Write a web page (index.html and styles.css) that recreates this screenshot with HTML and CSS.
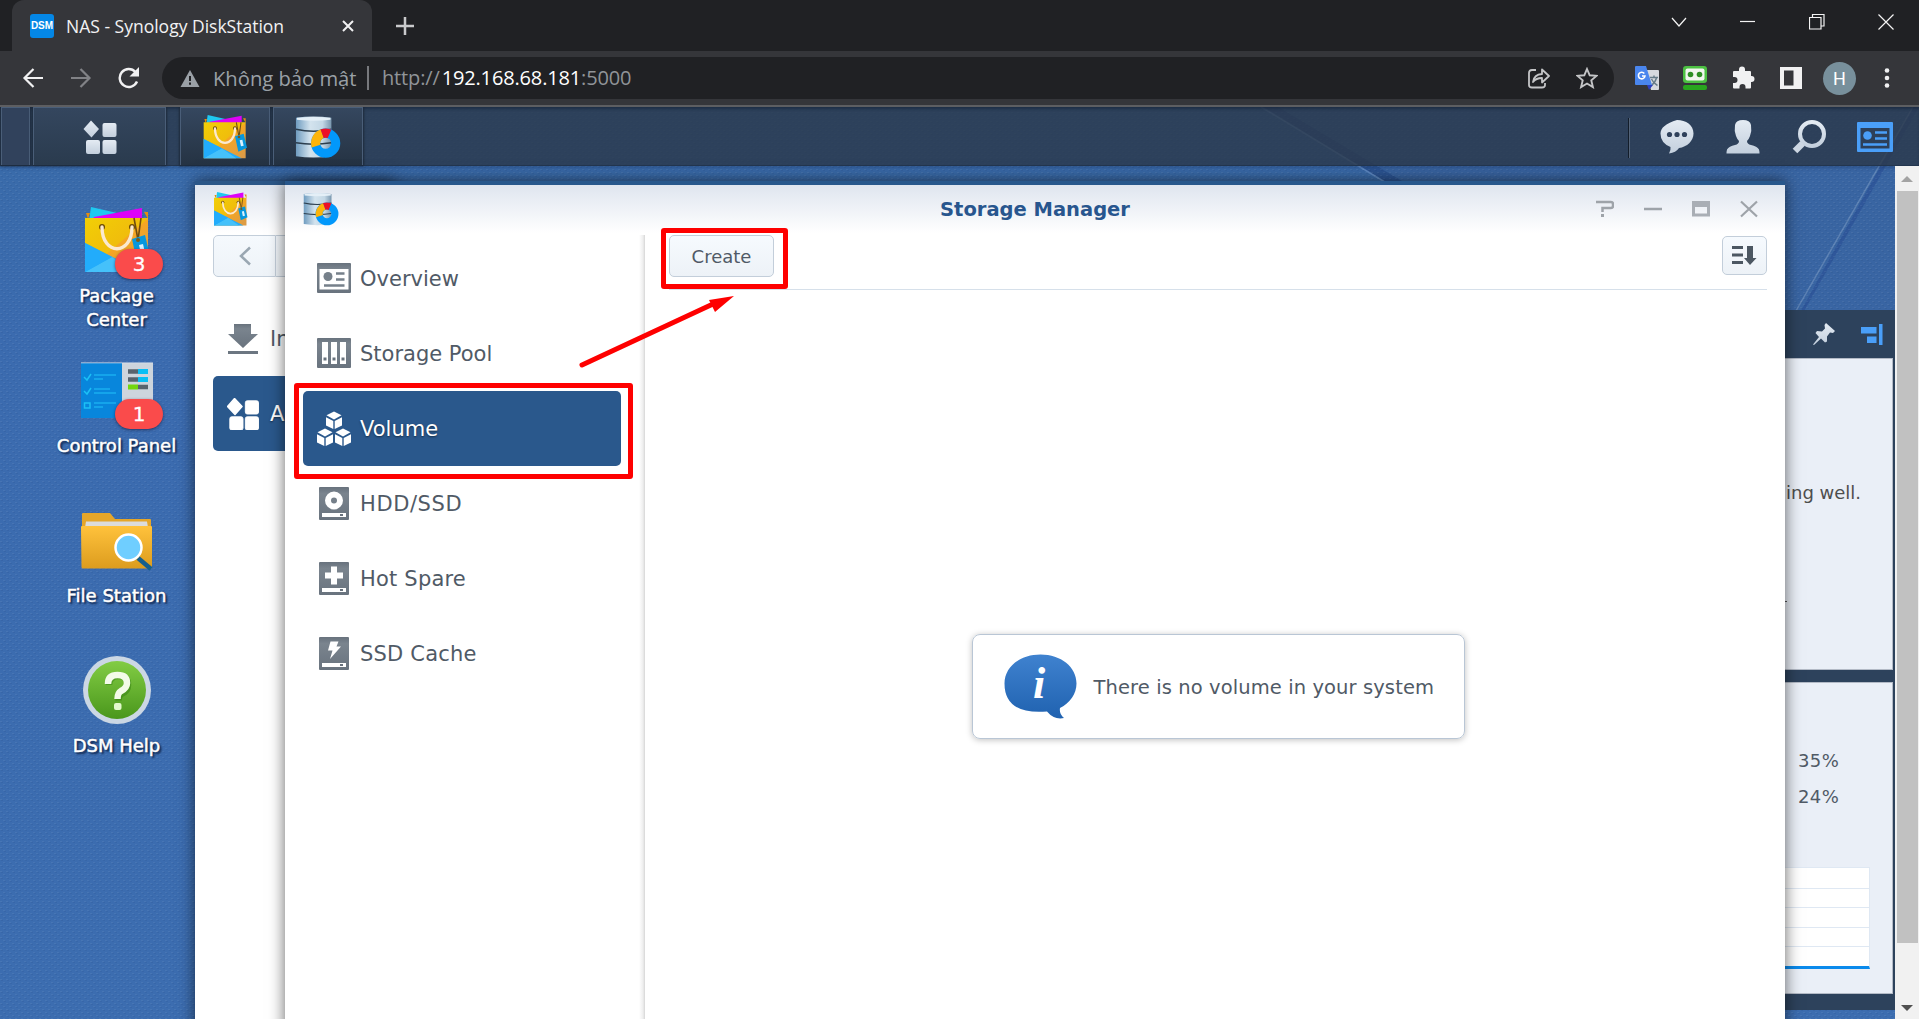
FILE: index.html

```html
<!DOCTYPE html>
<html lang="vi">
<head>
<meta charset="utf-8">
<title>NAS - Synology DiskStation</title>
<link rel="stylesheet" href="styles.css">
</head>
<body>
<svg class="defs" width="0" height="0" aria-hidden="true">
  <defs>
    <linearGradient id="gBag" x1="0" y1="0" x2="1" y2="1"><stop offset="0" stop-color="#f2cf05"/><stop offset=".5" stop-color="#f0bd0c"/><stop offset=".51" stop-color="#f5a623"/><stop offset="1" stop-color="#d99a4a"/></linearGradient>
    <linearGradient id="gDisk" x1="0" x2="1" y1="0" y2="0"><stop offset="0" stop-color="#6f9cc0"/><stop offset=".4" stop-color="#d3e3ee"/><stop offset=".75" stop-color="#c3d7e5"/><stop offset="1" stop-color="#7896ae"/></linearGradient>
    <linearGradient id="gLight" x1="0" x2="0" y1="0" y2="1"><stop offset="0" stop-color="#e4ebf3"/><stop offset="1" stop-color="#c3cfdd"/></linearGradient>
    <linearGradient id="gFolder" x1="0" x2="0" y1="0" y2="1"><stop offset="0" stop-color="#ffc23c"/><stop offset="1" stop-color="#dc9c1e"/></linearGradient>
    <linearGradient id="gGreen" x1="0" x2="0" y1="0" y2="1"><stop offset="0" stop-color="#82cc44"/><stop offset="1" stop-color="#4a971c"/></linearGradient>
    <linearGradient id="gInfo" x1="0" x2="0" y1="0" y2="1"><stop offset="0" stop-color="#3f82cf"/><stop offset="1" stop-color="#2062b0"/></linearGradient>
    <linearGradient id="gGrey" x1="0" x2="0" y1="0" y2="1"><stop offset="0" stop-color="#68727d"/><stop offset=".2" stop-color="#7a848e"/><stop offset="1" stop-color="#69737e"/></linearGradient>
    <symbol id="bag" viewBox="0 0 66 66">
      <path d="M7 0 42 8 40 16 5 14z" fill="#1fc8f0"/><path d="M10 10 58 1v12H8z" fill="#dd02f7"/>
      <path d="M2 6h4l-2 6zM60 5h4v7z" fill="#e08e12"/>
      <path d="M1 11h63v54H1z" fill="url(#gBag)"/>
      <path d="M1 36 58 65H1z" fill="#22acfb"/>
      <path d="M28 50 50 65H1z" fill="#45c1fa"/>
      <path d="M1 36 28 50 1 65z" fill="#22acfb"/>
      <circle cx="18" cy="20" r="3" fill="#6b4a06"/><circle cx="48" cy="20" r="3" fill="#6b4a06"/>
      <path d="M18 20c0 29 30 29 30 0" fill="none" stroke="#fbe9cf" stroke-width="3.4" stroke-linecap="round"/>
      <path d="m50 11 4 22 3-22" fill="none" stroke="#6e4c10" stroke-width="1.6"/>
      <path d="m48 32 13-4 5 21-13 6z" fill="#0797dd"/><path d="m55 38 4-1 2 9-4 1z" fill="#d8f2ff"/><circle cx="54" cy="33" r="2" fill="#7c5a16"/>
    </symbol>
    <symbol id="disk" viewBox="0 0 48 44">
      <path d="M1 2Q19-1 38 2v40q-19 3-37 0z" fill="url(#gDisk)"/>
      <path d="M2 2q17-2 35 0v2q-17 2-35 0z" fill="#e4eff7"/>
      <path d="M1 14q18 4 37 0M1 28q18 3 37 0" fill="none" stroke="#2c3e4e" stroke-width="1.6"/>
      <circle cx="32" cy="28.500" r="10.500" fill="none" stroke="#0298fb" stroke-width="9.500"/>
      <path d="M22 31.500A10.500 10.500 0 0 1 28.500 18.500" fill="none" stroke="#fdb409" stroke-width="9.500"/>
      <path d="M28.300 18.600A10.500 10.500 0 0 1 36 18.800" fill="none" stroke="#ed1026" stroke-width="9.500"/>
    </symbol>
    <symbol id="apps" viewBox="0 0 34 34"><path d="M8 0.500 16 9 8.500 17.500 0.500 9z" stroke-width="1.500" stroke-linejoin="round"/><rect x="19.500" y="3" width="14" height="14" rx="2"/><rect x="3" y="20" width="14" height="14" rx="2"/><rect x="19.500" y="20" width="14" height="14" rx="2"/></symbol>
  </defs>
</svg>

<header class="tabstrip">
  <div class="tab">
    <span class="favicon">DSM</span>
    <span class="tab-title">NAS - Synology DiskStation</span>
    <svg class="tab-close" width="12" height="12" viewBox="0 0 12 12"><path d="m1 1 10 10M11 1 1 11" stroke="#f1f1f2" stroke-width="2"/></svg>
  </div>
  <svg class="new-tab" width="18" height="18" viewBox="0 0 18 18"><path d="M9 0v18M0 9h18" stroke="#c9cacc" stroke-width="2.500"/></svg>
  <div class="win-buttons">
    <svg width="16" height="16" viewBox="0 0 16 16"><path d="m1 4 7 8 7-8"/></svg>
    <svg width="16" height="16" viewBox="0 0 16 16"><path d="M0 7.500h15"/></svg>
    <svg width="16" height="16" viewBox="0 0 16 16"><path d="M.5 3.500h11.500v11.500H.5zM3.500 3.500V.5h11.500v11.500h-3"/></svg>
    <svg width="16" height="16" viewBox="0 0 16 16"><path d="m.5.5 15 15m0-15-15 15"/></svg>
  </div>
</header>

<nav class="toolbar">
  <div class="nav-icons">
    <svg width="22" height="22" viewBox="0 0 22 22"><path d="M21 11H3M11.500 2 2.500 11l9 9" fill="none" stroke="#f1f1f2" stroke-width="2.200"/></svg>
    <svg width="22" height="22" viewBox="0 0 22 22"><path d="M1 11h18M10.500 2l9 9-9 9" fill="none" stroke="#818286" stroke-width="2.200"/></svg>
    <svg width="22" height="22" viewBox="0 0 22 22"><path d="M19 14.500A9 9 0 1 1 17.500 5" fill="none" stroke="#f1f1f2" stroke-width="2.400"/><path d="M21 0v9.500h-9.500z" fill="#f1f1f2"/></svg>
  </div>
  <div class="omnibox">
    <svg width="20" height="17" viewBox="0 0 20 17"><path d="M10 0 19.500 17H.5z" fill="#9aa0a6"/><path d="M10 6v5M10 12.500v2.200" stroke="#202124" stroke-width="2"/></svg>
    <span class="insecure">Không bảo mật</span>
    <span class="omni-sep"></span>
    <span class="url">http://<b>192.168.68.181</b>:5000</span>
    <svg class="share" width="22" height="22" viewBox="0 0 22 22" fill="none" stroke="#c4c5c7" stroke-width="1.800"><path d="M8 3H4Q1 3 1 6v12q0 2.500 3 2.500h10q3 0 3-2.500v-2"/><path d="M5 15Q6 7.500 14 7V2.500l7 6.500-7 6.500V11q-6 0-9 4z" stroke-linejoin="round"/></svg>
    <svg class="star" width="22" height="22" viewBox="0 0 22 22"><path d="m11 2 2.700 6.300 6.800.6-5.200 4.500 1.600 6.700L11 16.500 5.100 20.100l1.600-6.700L1.500 8.900l6.800-.6z" fill="none" stroke="#c4c5c7" stroke-width="1.900"/></svg>
  </div>
  <div class="extensions">
    <svg width="24" height="24" viewBox="0 0 24 24"><path d="M10 4h13q1 0 1 1v18q0 1-1 1H16z" fill="#d7dade"/><path d="M15 11.500h8M19 9.500v2M21.500 12q-1.500 5-5.500 7.500M16.500 13q2 4.500 6 6.500" fill="none" stroke="#667b88" stroke-width="1.400"/><path d="M12 19h6l-4 5z" fill="#2c3fc0"/><path d="M1 0h10l6 19H1q-1 0-1-1V1q0-1 1-1z" fill="#4a86ee"/><path d="M9.300 7.500A3.300 3.300 0 1 0 10 10H7" fill="none" stroke="#fff" stroke-width="1.600"/></svg>
    <svg width="24" height="24" viewBox="0 0 24 24"><rect width="24" height="17" rx="3" fill="#4cc042"/><rect x="2.500" y="2.500" width="19" height="12" rx="2" fill="#f2f5f0"/><circle cx="7.500" cy="8.500" r="2.800" fill="#2f8e25"/><circle cx="16.500" cy="8.500" r="2.800" fill="#2f8e25"/><rect y="19" width="24" height="5" rx="2" fill="#28a51e"/></svg>
    <svg width="24" height="24" viewBox="0 0 24 24"><path d="M3 5h5V3.500a3 3 0 0 1 6 0V5h5q1 0 1 1v4h.5a3 3 0 0 1 0 6H20v5.500q0 1-1 1h-4.500V21a3 3 0 0 0-6 0v1.500H3q-1 0-1-1V17h1.500a3 3 0 0 0 0-6H2V6q0-1 1-1z" fill="#f1f1f2"/></svg>
    <svg width="22" height="22" viewBox="0 0 22 22"><path d="M0 0h22v22H0zM4 3.500v15h9.500v-15z" fill="#f1f1f2" fill-rule="evenodd"/></svg>
    <span class="avatar">H</span>
    <svg width="6" height="22" viewBox="0 0 6 22" fill="#f1f1f2"><circle cx="3" cy="3.500" r="2.300"/><circle cx="3" cy="11" r="2.300"/><circle cx="3" cy="18.500" r="2.300"/></svg>
  </div>
</nav>

<main class="dsm">
  <svg class="wallpaper" width="1919" height="912" viewBox="0 107 1919 912">
    <defs>
      <pattern id="dots" width="6" height="6" patternUnits="userSpaceOnUse"><path d="M0 1h2v1H0zM3 4h2v1H3z" fill="#fff" opacity=".06"/><path d="M1 2h2v1H1zM4 5h2v1H4z" fill="#00184a" opacity=".07"/></pattern>
      <linearGradient id="sky" x1="0" y1="0" x2="0" y2="1"><stop offset="0" stop-color="#396ba8"/><stop offset=".25" stop-color="#3b6baf"/><stop offset="1" stop-color="#3c6db0"/></linearGradient>
    </defs>
    <rect y="107" width="1919" height="912" fill="url(#sky)"/>
    <path d="M1262 107 1400 190 1785 420 1919 1019V107z" fill="#3a64a0" opacity=".8"/>
    <path d="M1264 107h14l134 80h-18z" fill="#2c5594"/><path d="M1261 107l132 80" stroke="#6d97cf" stroke-width="1.500" opacity=".7"/>
    <path d="M1913 107h6L1799 320l-14 20z" fill="#2f579a"/><path d="M1913 107 1785 330" stroke="#6c8fbd" stroke-width="1.500" opacity=".7"/>
    <rect y="107" width="1919" height="912" fill="url(#dots)"/>
  </svg>

  <div class="taskbar">
    <span class="task-edge"></span>
    <div class="task main-menu"><svg width="34" height="34" fill="url(#gLight)"><use href="#apps"/></svg></div>
    <div class="task app"><svg width="46" height="44"><use href="#bag"/></svg></div>
    <div class="task app"><svg width="46" height="44"><use href="#disk"/></svg></div>
    <div class="tray">
      <svg width="36" height="36" viewBox="0 0 36 36"><path d="M18 1C27 1 34.500 6 34.500 14.500 34.500 22 28 28 20 29q-3 4.500-10 5.500 2-3 1.500-6.500Q1.500 24 1.500 14.500 1.500 6 18 1z" fill="url(#gLight)"/><g fill="#2f415b"><circle cx="10.500" cy="15.500" r="2.600"/><circle cx="18" cy="15.500" r="2.600"/><circle cx="25.500" cy="15.500" r="2.600"/></g></svg>
      <svg width="36" height="36" viewBox="0 0 36 36"><path d="M10 6q1-5 8-5t8 5q1 6-1 11-1.500 4-3 5 0 3 4 4 6 1 8 4.500.5 2 .5 4H1.500q0-2 .5-4 2-3.500 8-4.500 4-1 4-4-1.500-1-3-5-2-5-1-11z" fill="url(#gLight)"/></svg>
      <svg width="36" height="36" viewBox="0 0 36 36"><circle cx="21" cy="15" r="12" fill="none" stroke="url(#gLight)" stroke-width="4"/><path d="m11.500 24.500-7.500 7.500" stroke="#ccd6e2" stroke-width="6.500"/></svg>
      <svg width="36" height="30" viewBox="0 0 36 30"><path d="M0 1q0-1 1-1h34q1 0 1 1v28q0 1-1 1H1q-1 0-1-1zM3.500 6v20.500h29V6z" fill="#4a9ff9" fill-rule="evenodd"/><circle cx="10.500" cy="13.500" r="4.300" fill="#4a9ff9"/><path d="M18 10.500h12M18 16.500h12M6 22.500h24" stroke="#4a9ff9" stroke-width="2.500"/></svg>
    </div>
  </div>

  <div class="desktop">
    <ul class="shortcuts">
      <li><div class="pic"><svg width="66" height="66"><use href="#bag"/></svg><em class="badge">3</em></div><span>Package Center</span></li>
      <li><div class="pic"><svg width="72" height="56" viewBox="0 0 72 56"><path d="M0 1h41v55H0z" fill="#0886dc"/><path d="M41 1h31v55H41z" fill="#cdd5dd"/><path d="M0 0h72v1.500H0z" fill="#dfe8f0" opacity=".5"/><path d="m3 15 3 3 4-6M3 29l3 3 4-6M3.500 41h5.500v5H3.500z" fill="none" stroke="#1cc0f5" stroke-width="1.500"/><path d="M13 13h22M13 17h9M13 27h16M13 31h22M13 41h22M13 45h9" stroke="#18aef0" stroke-width="1.600"/><path d="M47 9.500h10M47 17.500h10M57 25h10" stroke="#58646e" stroke-width="4.500"/><path d="M57 9.500h10M57 17.500h10" stroke="#09bff5" stroke-width="5"/><path d="M47 25h10" stroke="#73d60f" stroke-width="5"/></svg><em class="badge">1</em></div><span>Control Panel</span></li>
      <li><div class="pic folder"><svg width="72" height="60" viewBox="0 0 72 60"><path d="M1 2q0-1 1-1h27l5 6h35q1 0 1 1v20H1z" fill="#e5a62a"/><path d="M5 9.500h61l1 6H4z" fill="#dcdcdc"/><path d="M0 15q0-1 1-1h69q1 0 1 1v40q0 1.500-1 1.500H2q-1.500 0-1.500-1.500z" fill="url(#gFolder)"/><path d="m57 46 13 11" stroke="#155f8e" stroke-width="4.500"/><circle cx="47.500" cy="35.500" r="13" fill="#6fceff" stroke="#fff" stroke-width="2.500"/></svg></div><span>File Station</span></li>
      <li><div class="pic"><svg width="70" height="72" viewBox="0 0 70 72"><circle cx="35" cy="36" r="34" fill="#cbd7e4"/><circle cx="35" cy="36" r="29" fill="url(#gGreen)"/><path d="M26 29q0-9 9.500-9T45 29q0 6-6 8.500-3.500 2-3.500 7" fill="none" stroke="#317d10" stroke-width="6.500" transform="translate(1 2)" opacity=".5"/><path d="M26 30q0-9 9.500-9T45 29q0 5-6 8-3.500 2-3.500 8" fill="none" stroke="#f3fbe8" stroke-width="6.500"/><rect x="32" y="49" width="7.500" height="7" rx="2" fill="#e2f9cc"/></svg></div><span>DSM Help</span></li>
    </ul>

    <aside class="widgets">
      <div class="widgets-head">
        <svg width="22" height="22" viewBox="0 0 22 22"><path d="m13 0 9 8-2 2-3-.5-3 4v5l-2 1-4-4L1 22l-1-.5 6-7.500-3.500-4 1.500-2 5 .5 3-3L11.500 2z" fill="url(#gLight)"/></svg>
        <svg width="22" height="21" viewBox="0 0 22 21"><path d="M0 3h15.500v6.500H0zM6 12.500h9.500V19H6zM18 0h3.500v21H18z" fill="#4a9ff9"/></svg>
      </div>
      <section class="widget health"><p>ing well.</p><i></i></section>
      <section class="widget monitor"><p>35%</p><p>24%</p><div class="chart"><i></i><i></i><i></i><i></i><i></i></div></section>
    </aside>

    <section class="window package">
      <div class="win-head"><svg width="35" height="34"><use href="#bag"/></svg></div>
      <div class="back-btns"><span><svg width="12" height="20" viewBox="0 0 12 20"><path d="m11 1.500-9 8.500 9 8.500" fill="none" stroke="#9aa7b2" stroke-width="2.500"/></svg></span><span></span></div>
      <ul class="menu">
        <li><svg width="32" height="32" viewBox="0 0 32 32"><path d="M7 1h17v10h7L16 25 1 11h6z" fill="url(#gGrey)"/><path d="M1 28h30v3H1z" fill="#6c7681"/></svg><span>In</span></li>
        <li class="on"><svg width="32" height="32" fill="#fff" stroke="#fff"><use href="#apps"/></svg><span>A</span></li>
      </ul>
    </section>

    <section class="window storage">
      <div class="win-head">
        <svg width="36" height="34"><use href="#disk"/></svg>
        <h1>Storage Manager</h1>
        <div class="controls">
          <svg width="18" height="18" viewBox="0 0 18 18"><path d="M0 2h15q2 0 2 2v2q0 2-2 2H6.500v4" fill="none" stroke="#9ea3a9" stroke-width="2.500"/><path d="M5 14h3v3H5z" fill="#9ea3a9"/></svg>
          <svg width="18" height="18" viewBox="0 0 18 18"><path d="M0 9h18" stroke="#9ea3a9" stroke-width="2.500"/></svg>
          <svg width="18" height="18" viewBox="0 0 18 18"><path d="M0 1h18v15.500H0zM3 7v6.500h12V7z" fill="#a9aeb5" fill-rule="evenodd"/></svg>
          <svg width="18" height="18" viewBox="0 0 18 18"><path d="m1 1.500 16 15m0-15-16 15" stroke="#9ea3a9" stroke-width="2.200"/></svg>
        </div>
      </div>
      <div class="win-body">
        <ul class="menu">
          <li><svg width="36" height="36" viewBox="0 0 36 36"><path d="M1 3q0-1 1-1h32q1 0 1 1v28q0 1-1 1H2q-1 0-1-1zM3.500 8v20.500h29V8z" fill="url(#gGrey)" fill-rule="evenodd"/><circle cx="12" cy="15.500" r="4.500" fill="#76808a"/><path d="M20 12.500H28.500M20 18.500H28.500M8 24.500H28.500" stroke="#76808a" stroke-width="2.600"/></svg><span>Overview</span></li>
          <li><svg width="36" height="36" viewBox="0 0 36 36"><rect x="1" y="2" width="34" height="30" rx="1" fill="url(#gGrey)"/><path d="M6 6h6v22H6zM15 6h6v22H15zM24 6h6v22H24z" fill="#fff"/><path d="M7.500 21.500h3v3h-3zM16.500 21.500h3v3h-3zM25.500 21.500h3v3h-3z" fill="#68727d"/></svg><span>Storage Pool</span></li>
          <li class="on"><svg width="36" height="36" viewBox="0 0 36 36" fill="#fff"><g id="cube"><path d="m18 .5 7.500 3.800L18 8.500l-7.500-4.200z"/><path d="M10 6.200 17.300 10v8L10 14.500zM26 6.200 18.700 10v8l7.300-3.500z"/></g><use href="#cube" x="-9" y="17"/><use href="#cube" x="9" y="17"/></svg><span>Volume</span></li>
          <li><svg width="36" height="36" viewBox="0 0 36 36"><rect x="3" y="1" width="30" height="33" rx="1" fill="url(#gGrey)"/><circle cx="18" cy="14.500" r="6" fill="none" stroke="#fff" stroke-width="6"/><path d="M6 27h24v4H6z" fill="#fff"/><path d="M24 28h3v2h-3z" fill="#68727d"/></svg><span class="caps">HDD/SSD</span></li>
          <li><svg width="36" height="36" viewBox="0 0 36 36"><rect x="3" y="1" width="30" height="33" rx="1" fill="url(#gGrey)"/><path d="M15 5.500h6v6h6v6h-6v6h-6v-6H9v-6h6z" fill="#fff"/><path d="M6 27h24v4H6z" fill="#fff"/><path d="M24 28h3v2h-3z" fill="#68727d"/></svg><span class="wide">Hot Spare</span></li>
          <li><svg width="36" height="36" viewBox="0 0 36 36"><rect x="3" y="1" width="30" height="33" rx="1" fill="url(#gGrey)"/><path d="M14.500 5.500h8l-2 5H25L14 23l2.500-8.500H12z" fill="#fff"/><path d="M6 27h24v4H6z" fill="#fff"/><path d="M24 28h3v2h-3z" fill="#68727d"/></svg><span class="wide">SSD Cache</span></li>
        </ul>
        <div class="pane">
          <div class="pane-bar">
            <button class="create">Create</button>
            <button class="sort"><svg width="25" height="20" viewBox="0 0 25 20"><path d="M0 0h11v3H0zM0 7.500h11v3H0zM0 15h11v3H0zM15 0h6v12h3.500L18 19l-6-7h3z" fill="#4c5762"/></svg></button>
          </div>
          <div class="message">
            <div class="msg-box">
              <svg width="73" height="65" viewBox="0 0 73 65"><path d="M36.500.5C57 .5 72.500 13 72.500 29.500 72.500 40 66 49 56 54q-1 6 4 10-10 2-17-6.500Q.5 61 .5 29.500C.5 13 16 .5 36.500.5z" fill="url(#gInfo)"/><text x="29" y="44" class="info-i">i</text></svg>
              <span>There is no volume in your system</span>
            </div>
          </div>
        </div>
      </div>
    </section>

    <div class="scrollbar">
      <svg width="12" height="6" viewBox="0 0 12 6"><path d="m6 0 6 6H0z" fill="#a3a3a3"/></svg>
      <span class="thumb"></span>
      <svg width="12" height="6" viewBox="0 0 12 6"><path d="M0 0h12L6 6z" fill="#505050"/></svg>
    </div>
  </div>

  <span class="mark mark-volume"></span>
  <span class="mark mark-create"></span>
  <svg class="arrow" width="160" height="76" viewBox="0 0 160 76"><path d="M7 70 138 9" stroke="#fe0000" stroke-width="5" stroke-linecap="round"/><path d="M159 1 134 5l6 12z" fill="#fe0000"/></svg>
</main>
</body>
</html>
```

FILE: styles.css

```css
* { box-sizing: border-box; }
body {
  margin: 0;
  width: 1919px;
  height: 1019px;
  overflow: hidden;
  display: flex;
  flex-direction: column;
  font-family: "DejaVu Sans", sans-serif;
  color: #505a66;
}
ul { list-style: none; margin: 0; padding: 0; }
p, h1 { margin: 0; }
svg { flex: none; display: block; }
.defs { position: absolute; }

/* Browser chrome */
.tabstrip {
  height: 51px;
  flex: none;
  display: flex;
  align-items: flex-start;
  background: #202124;
  padding-left: 12px;
}
.tab {
  width: 360px;
  height: 51px;
  display: flex;
  align-items: center;
  padding: 0 18px;
  background: #35363a;
  border-radius: 12px 12px 0 0;
}
.favicon {
  width: 24px;
  height: 24px;
  border-radius: 3px;
  background: #0487e6;
  color: #fff;
  font: bold 10px/24px "Liberation Sans", sans-serif;
  text-align: center;
}
.tab-title {
  font: 17.500px/24px "Open Sans", sans-serif;
  color: #f2f2f3;
  margin-left: 12px;
  flex: 1;
  white-space: nowrap;
}
.new-tab { margin: 17px 0 0 24px; }
.win-buttons { margin: 14px 25px 0 auto; display: flex; gap: 53px; }
.win-buttons path { fill: none; stroke: #f4f4f4; stroke-width: 1.2; }

.toolbar {
  height: 56px;
  flex: none;
  display: flex;
  align-items: center;
  padding-bottom: 2px;
  background: #35363a;
  border-bottom: 2px solid #5d5e61;
}
.nav-icons { width: 162px; display: flex; gap: 26px; padding-left: 22px; margin-top: 2px; }
.omnibox {
  width: 1452px;
  height: 42px;
  margin-top: 2px;
  border-radius: 21px;
  background: #202124;
  display: flex;
  align-items: center;
  padding: 0 16px 0 18px;
  font: 20px/30px "Open Sans", sans-serif;
  color: #9aa0a6;
  white-space: nowrap;
}
.insecure { margin-left: 13px; width: 146px; font-size: 20.200px; }
.omni-sep { width: 2px; height: 24px; background: #77797d; margin: 0 13px 0 8px; }
.url { font-size: 20px; letter-spacing: -0.15px; flex: 1; color: #909498; }
.url b { font-weight: normal; color: #fff; margin-left: 2px; }
.star { margin-left: 26px; }
.extensions { display: flex; align-items: center; padding-left: 21px; margin-top: 2px; }
.extensions > :nth-child(2) { margin-left: 24px; }
.extensions > :nth-child(3) { margin-left: 24px; }
.extensions > :nth-child(4) { margin-left: 25px; }
.avatar {
  width: 33px;
  height: 33px;
  margin: 0 28px 0 21px;
  border-radius: 50%;
  background: #78909c;
  color: #fff;
  font: 18px/33px Roboto, sans-serif;
  text-align: center;
}

/* DSM shell */
.dsm { position: relative; flex: 1; display: flex; flex-direction: column; overflow: hidden; }
.wallpaper { position: absolute; left: 0; top: 0; }
.taskbar {
  position: relative;
  height: 59px;
  flex: none;
  display: flex;
  background: rgba(43, 56, 74, .82);
  border-bottom: 1px solid #23364f;
  box-shadow: inset 0 3px 3px -1px rgba(16, 30, 50, .5), 0 1px 4px rgba(20, 40, 80, .4);
}
.task-edge, .task { height: 58px; border: 1px solid #4a5e78; border-bottom: 0; box-shadow: 0 0 2px 1px #1d2a3a; }
.task-edge { width: 29px; margin: 0 3px 0 1px; background: #31425c; }
.task { display: flex; align-items: center; justify-content: center; background: linear-gradient(#35475f, #253343); }
.main-menu { width: 133px; margin-right: 14px; background: linear-gradient(#34465e, #2a3b4e); }
.app { width: 90px; margin-right: 3px; }
.tray {
  margin: 0 26px 0 auto;
  display: flex;
  align-items: center;
  gap: 30px;
  padding-left: 31px;
  height: 59px;
  background: linear-gradient(90deg, #131d2a 1px, #536378 1px, #536378 2px, transparent 2px) 0 11px / 100% 40px no-repeat;
}

.desktop { position: relative; flex: 1; display: flex; justify-content: space-between; }
.shortcuts { padding: 30px 0 0 44px; display: flex; flex-direction: column; }
.shortcuts li { width: 145px; height: 150px; text-align: center; }
.pic { position: relative; height: 88px; display: flex; align-items: center; justify-content: center; }
.pic.folder { padding-top: 3px; }
.badge {
  position: absolute;
  left: 71px;
  top: 53px;
  width: 48px;
  height: 30px;
  border-radius: 15px;
  background: #fa4b4b;
  color: #fff;
  font: 20px/31px "DejaVu Sans", sans-serif;
  -webkit-text-stroke: .3px #fff;
  box-shadow: 0 1px 3px rgba(20, 20, 50, .6);
}
.shortcuts span {
  display: block;
  width: 130px;
  margin: 0 auto;
  font-size: 18px;
  line-height: 24px;
  color: #fff;
  -webkit-text-stroke: .5px #fff;
  text-shadow: 2px 2px 2px #0e2247, 0 0 2px rgba(10, 25, 60, .7);
}

/* Widget column at the right edge of the desktop */
.widgets {
  position: absolute;
  left: 1780px;
  top: 144px;
  width: 115px;
  height: 700px;
  background: #2d425c;
}
.widgets-head { height: 48px; display: flex; align-items: center; justify-content: flex-end; gap: 26px; padding-right: 12px; }
.widget {
  width: 113px;
  height: 312px;
  background: #eaeff7;
  border: 1px solid #b3bac6;
  font-size: 18px;
}
.health { padding: 122px 0 0 5px; color: #4e4e4e; }
.health p { line-height: 24px; }
.health i { display: block; width: 2px; height: 1px; margin: 96px 0 0 -1px; background: #555; }
.monitor { margin-top: 12px; padding: 60px 22px 0 0; }
.monitor p { padding-left: 17px; line-height: 36px; height: 36px; letter-spacing: .4px; }
.chart {
  margin-top: 52px;
  height: 102px;
  display: grid;
  grid-template-rows: repeat(5, 1fr);
  background: #fff;
  border-top: 1px solid #dfe8f3;
  border-right: 1px solid #dfe8f3;
  border-bottom: 3px solid #0a8aec;
}
.chart i + i { border-top: 1px solid #dfe8f3; }

/* Windows */
.window {
  position: absolute;
  top: 15px;
  bottom: -20px;
  background: #fff;
  border-top: 4px solid #28578c;
  box-shadow: 0 0 15px rgba(0, 0, 0, .6);
}
.package { left: 195px; width: 200px; border-top-color: #2c5788; }
.storage { left: 285px; width: 1500px; display: flex; flex-direction: column; }
.win-head {
  height: 50px;
  flex: none;
  display: flex;
  align-items: center;
  padding: 0 27px 0 18px;
  background: linear-gradient(#dfe5ef, #fff 96%);
}
.win-head svg:first-child { margin-bottom: 2px; }
.win-head h1 { flex: 1; text-align: center; font-size: 19.500px; line-height: 24px; color: #28568e; padding-left: 135px; }
.controls { display: flex; gap: 30px; }

.back-btns { display: flex; height: 42px; margin: 0 0 24px 18px; }
.back-btns span {
  width: 63px;
  border: 1px solid #c3ceda;
  background: linear-gradient(#f5f9fd, #eef3f8);
  display: flex;
  align-items: center;
  justify-content: center;
}
.back-btns span:first-child { border-radius: 5px 0 0 5px; }
.back-btns span + span { border-left: 0; }
.menu li {
  height: 75px;
  display: flex;
  align-items: center;
  gap: 8px;
  padding-left: 13px;
  font-size: 21px;
  border-radius: 5px;
  white-space: nowrap;
}
.menu .caps { letter-spacing: .6px; }
.menu .wide { letter-spacing: .2px; }
.menu li.on { background: #2a588c; color: #fff; text-shadow: 0 1px 2px rgba(0, 0, 0, .5); }
.package .menu { padding-left: 18px; overflow: hidden; }
.package .menu li { gap: 11px; padding-left: 14px; }

.win-body { flex: 1; display: flex; }
.storage .menu {
  width: 360px;
  padding: 6px 24px 0 18px;
  background: linear-gradient(90deg, transparent 354px, #eee 358px, #d6d6d6);
}
.storage .menu li { padding-left: 12.500px; }
.storage .menu li svg { margin-right: .5px; }
.pane { flex: 1; display: flex; flex-direction: column; padding: 0 18px 0 24px; }
.pane-bar { height: 55px; flex: none; display: flex; justify-content: space-between; border-bottom: 1px solid #d6e0ea; }
button {
  padding: 0;
  border: 1px solid #c3ceda;
  border-radius: 5px;
  background: linear-gradient(#f6fafe, #edf2f7);
  color: #505a66;
  font: 18px "DejaVu Sans", sans-serif;
}
.create { width: 105px; height: 42px; }
.sort { width: 45px; height: 39px; margin-top: 1px; display: flex; align-items: center; justify-content: center; }
.message { flex: 1; display: flex; justify-content: center; padding: 344px 0 0; }
.msg-box {
  width: 493px;
  height: 105px;
  display: flex;
  align-items: center;
  gap: 17px;
  padding-left: 31px;
  border: 1px solid #b9c6d5;
  border-radius: 8px;
  box-shadow: 0 1px 6px rgba(0, 0, 0, .25);
  font-size: 19.500px;
  letter-spacing: .1px;
  white-space: nowrap;
}
.msg-box span { padding-top: 1px; }
.info-i { font: italic bold 44px "Liberation Serif", serif; fill: #fff; }

.scrollbar {
  position: relative;
  width: 24px;
  margin-left: auto;
  background: #f1f1f1;
  display: flex;
  flex-direction: column;
  align-items: center;
  justify-content: space-between;
  padding: 10px 0 8px;
}
.thumb { width: 21px; height: 752px; margin: 9px 0 auto; background: #c1c1c1; }

/* Red callouts */
.mark { position: absolute; border: 5px solid #fe0000; border-radius: 3px; }
.mark-volume { left: 294px; top: 276px; width: 339px; height: 96px; }
.mark-create { left: 661px; top: 121px; width: 127px; height: 61px; }
.arrow { position: absolute; left: 575px; top: 188px; }
```
